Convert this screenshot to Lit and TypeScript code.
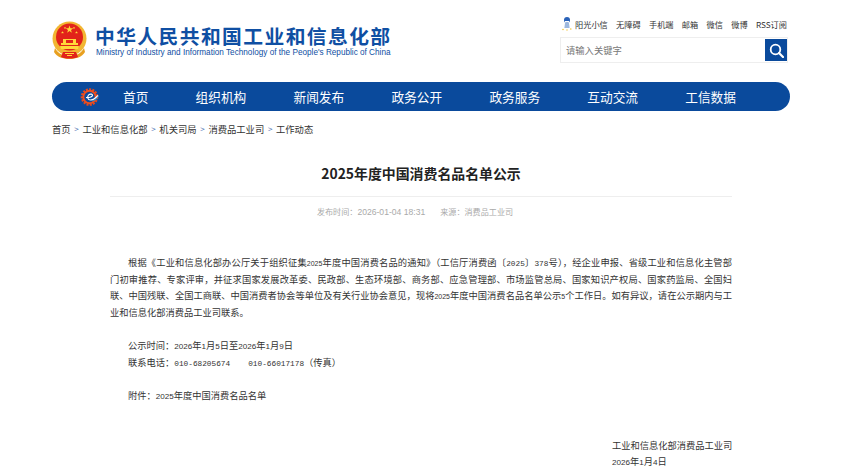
import { LitElement, html, css, svg } from "lit";
import { customElement } from "lit/decorators.js";

const n = (s: string) => html`<span class="n">${s}</span>`;
const d = (s: string) => html`<span class="d">${s}</span>`;
const a = (s: string) => html`<span class="a">${s}</span>`;

const star = (cx: number, cy: number, r: number) => {
  const pts: string[] = [];
  for (let i = 0; i < 10; i++) {
    const t = -Math.PI / 2 + (i * Math.PI) / 5;
    const q = i % 2 ? r * 0.4 : r;
    pts.push(`${(cx + q * Math.cos(t)).toFixed(2)},${(cy + q * Math.sin(t)).toFixed(2)}`);
  }
  return svg`<polygon points=${pts.join(" ")} fill="#ffd83a"/>`;
};

@customElement("app-root")
export class AppRoot extends LitElement {
  static styles = css`
    :host {
      display: block;
      height: 469px;
      overflow: hidden;
      background: #fff;
      font-family: "Noto Sans CJK SC", "Liberation Sans", sans-serif;
      color: #333;
    }
    .page {
      width: 738px;
      margin-left: 52px;
    }
    .header {
      display: flex;
      justify-content: space-between;
      height: 82px;
    }
    .brand {
      display: flex;
      gap: 8px;
      padding-top: 21px;
      align-items: flex-start;
    }
    .emblem {
      display: block;
    }
    .brand-text {
      padding-top: 3px;
      color: #0f4fa3;
    }
    .cn {
      font-size: 19.8px;
      letter-spacing: 1.4px;
      font-weight: 700;
      line-height: 23px;
      white-space: nowrap;
    }
    .en {
      font-family: "Liberation Sans", sans-serif;
      font-size: 8.2px;
      line-height: 10px;
      margin-top: 1px;
      padding-left: 1px;
      white-space: nowrap;
    }
    .tools {
      width: 228px;
      margin-right: 2px;
      padding-top: 16px;
      display: flex;
      flex-direction: column;
      align-items: stretch;
    }
    .links {
      display: flex;
      justify-content: flex-end;
      align-items: center;
      gap: 8.3px;
      height: 15px;
      padding-right: 1px;
      font-size: 8.2px;
      color: #333;
      white-space: nowrap;
    }
    .sun {
      display: flex;
      align-items: center;
      gap: 3px;
    }
    .search {
      margin-top: 6px;
      height: 26px;
      box-sizing: border-box;
      border: 1px solid #eee;
      display: flex;
      align-items: center;
      justify-content: space-between;
      padding: 0 0 0 5px;
      font-size: 9.3px;
      color: #777;
    }
    .btn {
      width: 22px;
      height: 22px;
      background: #0a4a9c;
      display: flex;
      align-items: center;
      justify-content: center;
    }
    .nav {
      height: 29px;
      background: #0a4a9c;
      border-radius: 14.5px;
      display: flex;
      align-items: center;
      padding-left: 28px;
      color: #fff;
      font-size: 12.7px;
      white-space: nowrap;
    }
    .nav-logo {
      margin-right: 23px;
      display: block;
    }
    .nav-items {
      display: flex;
      gap: 47.2px;
    }
    .crumbs {
      display: flex;
      gap: 3.7px;
      height: 35px;
      align-items: center;
      font-size: 9.3px;
      color: #333;
      white-space: nowrap;
    }
    .sep {
      color: #3f6cb0;
      font-size: 8px;
    }
    .article {
      margin: 1px 58px 0;
    }
    h1 {
      margin: 0;
      padding-top: 9px;
      height: 34px;
      line-height: 34px;
      font-size: 13.9px;
      font-weight: 700;
      color: #222;
      text-align: center;
    }
    .meta {
      margin-top: 6px;
      border-top: 1px solid #eee;
      height: 58px;
      padding: 9px 12px 0 0;
      box-sizing: border-box;
      display: flex;
      justify-content: center;
      gap: 15px;
      font-size: 8.1px;
      line-height: 12px;
      color: #aaa;
      white-space: nowrap;
    }
    .meta b {
      font-family: "Liberation Sans", sans-serif;
      font-weight: 400;
      font-size: 8.6px;
    }
    .body {
      font-size: 9.25px;
      line-height: 16.6px;
      color: #333;
      display: flex;
      flex-direction: column;
    }
    .ln {
      display: block;
      white-space: nowrap;
      text-align: justify;
      text-align-last: justify;
    }
    .first {
      padding-left: 18px;
    }
    .rest {
      display: block;
      white-space: nowrap;
    }
    .in {
      padding-left: 18px;
    }
    .gap {
      margin-top: 16.6px;
    }
    .n,
    .d,
    .a {
      line-height: 1;
    }
    .n {
      font-family: "Liberation Mono", monospace;
      font-size: 7.78px;
    }
    .d {
      font-family: "Liberation Sans", sans-serif;
      font-size: 7px;
    }
    .a {
      font-family: "Liberation Sans", sans-serif;
      font-size: 8.1px;
    }
    .ph {
      margin-left: 18px;
    }
    .sign {
      margin-top: 33.2px;
      align-self: flex-end;
      width: 120px;
      white-space: nowrap;
    }
  `;

  render() {
    return html`
      <div class="page">
        <header class="header">
          <div class="brand">
            <svg class="emblem" width="35" height="39" viewBox="0 0 35 39">
              <circle cx="17.5" cy="17.5" r="17" fill="#f2b632"/>
              <circle cx="17.5" cy="16" r="13.5" fill="#e2231a"/>
              ${star(17.5, 8.5, 4)}${star(10.5, 11.5, 1.5)}${star(13, 7, 1.3)}${star(22, 7, 1.3)}${star(24.5, 11.5, 1.5)}
              <path d="M9 22h17v2H9zM11 18h13v4H11z" fill="#ffd83a"/>
              <path d="M14 19h7v3h-7z" fill="#e2231a"/>
              <path d="M8 25h19l-1 3H9z" fill="#ffd83a"/>
              <path d="M3 27c3 6 9 8 14.500 8S29 33 32 27l1 4c-3 5-9 7-15.500 7S5 36 2 31z" fill="#e8a020"/>
              <path d="M11 31h13l2 5c-5 2-12 2-17 0z" fill="#e2231a"/>
              <path d="M13 32h9v1h-9zM15 34h5v1h-5z" fill="#ffd83a"/>
            </svg>
            <div class="brand-text">
              <div class="cn">中华人民共和国工业和信息化部</div>
              <div class="en">Ministry of Industry and Information Technology of the People's Republic of China</div>
            </div>
          </div>
          <div class="tools">
            <div class="links">
              <span class="sun">
                <svg width="10" height="15" viewBox="0 0 10 15">
                  <circle cx="5" cy="4" r="3" fill="#2a62b8"/>
                  <path d="M3 7h4l.6 5H2.400z" fill="#9db8de"/>
                  <path d="M3 5h4v1.500H3z" fill="#fff"/>
                  <circle cx="1" cy="13.500" r=".8" fill="#f3c63c"/>
                  <circle cx="8.800" cy="13" r=".8" fill="#f3c63c"/>
                  <circle cx="5" cy="14" r=".7" fill="#f3c63c"/>
                </svg>
                阳光小信
              </span>
              <span>无障碍</span><span>手机端</span><span>邮箱</span><span>微信</span><span>微博</span><span>RSS订阅</span>
            </div>
            <div class="search">
              <span>请输入关键字</span>
              <div class="btn">
                <svg width="15" height="15" viewBox="0 0 15 15" fill="none" stroke="#fff" stroke-width="1.800">
                  <circle cx="6.500" cy="6.500" r="4.800"/>
                  <path d="M10 10l4 4" stroke-linecap="round" stroke-width="2.200"/>
                </svg>
              </div>
            </div>
          </div>
        </header>

        <nav class="nav">
          <svg class="nav-logo" width="20" height="20" viewBox="0 0 20 20">
            <circle cx="9.500" cy="10" r="7.600" fill="none" stroke="#e8481c" stroke-width="2.400" stroke-dasharray="2 1.200" />
            <circle cx="9.500" cy="10" r="6.200" fill="none" stroke="#ee4f1e" stroke-width="2"/>
            <path d="M6 10.500c3 .5 6-.5 6.500-2 .4-1.500-2.500-1.800-3.800-.6C7 9.500 7.500 13 10.500 13c3 0 5-1.500 7.500-4.500" fill="none" stroke="#fff" stroke-width="1.200"/>
            <path d="M11 13.500c3 0 5.500-2 8-5.500-1 4-4.500 7-8 5.500z" fill="#1f8fd8"/>
          </svg>
          <div class="nav-items">
            <span>首页</span><span>组织机构</span><span>新闻发布</span><span>政务公开</span><span>政务服务</span><span>互动交流</span><span>工信数据</span>
          </div>
        </nav>

        <div class="crumbs">
          <span>首页</span><span class="sep">&gt;</span>
          <span>工业和信息化部</span><span class="sep">&gt;</span>
          <span>机关司局</span><span class="sep">&gt;</span>
          <span>消费品工业司</span><span class="sep">&gt;</span>
          <span>工作动态</span>
        </div>

        <article class="article">
          <h1>2025年度中国消费名品名单公示</h1>
          <div class="meta">
            <span>发布时间：<b>2026-01-04 18:31</b></span>
            <span>来源：消费品工业司</span>
          </div>
          <div class="body">
            <span class="ln first">根据《工业和信息化部办公厅关于组织征集${d("2025")}年度中国消费名品的通知》（工信厅消费函〔${n("2025")}〕${n("378")}号），经企业申报、省级工业和信息化主管部</span>
            <span class="ln">门初审推荐、专家评审，并征求国家发展改革委、民政部、生态环境部、商务部、应急管理部、市场监管总局、国家知识产权局、国家药监局、全国妇</span>
            <span class="ln">联、中国残联、全国工商联、中国消费者协会等单位及有关行业协会意见，现将${d("2025")}年度中国消费名品名单公示${d("5")}个工作日。如有异议，请在公示期内与工</span>
            <span class="rest">业和信息化部消费品工业司联系。</span>
            <span class="rest in gap">公示时间：${a("2026")}年${a("1")}月${a("5")}日至${a("2026")}年${a("1")}月${a("9")}日</span>
            <span class="rest in">联系电话：${n("010-68205674")}<span class="ph">${n("010-66017178")}</span>（传真）</span>
            <span class="rest in gap">附件：${a("2025")}年度中国消费名品名单</span>
            <div class="sign">
              <div>工业和信息化部消费品工业司</div>
              <div>${a("2026")}年${a("1")}月${a("4")}日</div>
            </div>
          </div>
        </article>
      </div>
    `;
  }
}
